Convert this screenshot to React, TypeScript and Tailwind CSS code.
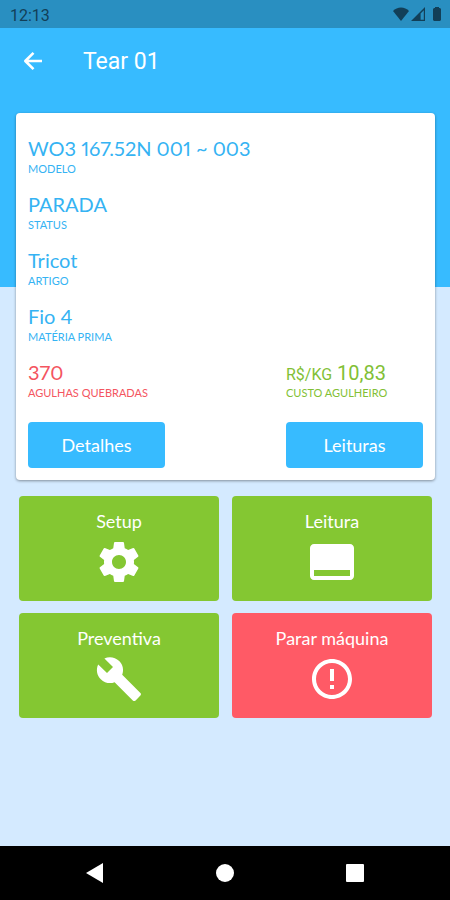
import type { ReactNode } from "react";
import { MdCallToAction, MdErrorOutline } from "react-icons/md";

type FieldProps = {
  label: string;
  color?: string;
  children: ReactNode;
};

type TileProps = {
  label: string;
  icon: ReactNode;
  color?: string;
};

function StatusBar() {
  return (
    <div className="flex h-7 items-center justify-between bg-[#298fc1] pr-2 pl-[10px] text-[#123f58]">
      <span className="pt-[3px] font-[Roboto,sans-serif] text-base leading-5">12:13</span>
      <div className="flex items-center" aria-hidden="true">
        <svg width="18" height="14" viewBox="0 0 18 14" fill="currentColor">
          <path d="M9 14 1 4C3 2 6 .6 9 .6S15 2 17 4Z" />
        </svg>
        <svg width="16" height="14" viewBox="0 0 16 14" fill="currentColor">
          <path fillRule="evenodd" d="M15 0v14H1ZM13.8 3.2 10.6 6.4v6.3h3.2Z" />
        </svg>
        <svg width="10" height="14" viewBox="0 0 10 14" className="ml-[6px]" fill="currentColor">
          <path d="M3 0h4v1h1l1 1v11l-1 1H2l-1-1V2l1-1h1Z" />
        </svg>
      </div>
    </div>
  );
}

function BackIcon() {
  return (
    <svg
      width="26"
      height="26"
      viewBox="0 0 26 26"
      fill="none"
      stroke="currentColor"
      strokeWidth="2.6"
      strokeLinejoin="round"
    >
      <path d="M22 13H5.5M13.5 4.8 5.3 13l8.2 8.2" />
    </svg>
  );
}

function GearIcon() {
  return (
    <svg width="1em" height="1em" viewBox="0 0 24 24" fill="currentColor">
      <path d="M19.43 12.98c.04-.32.07-.64.07-.98s-.03-.66-.07-.98l2.11-1.65c.19-.15.24-.42.12-.64l-2-3.46c-.12-.22-.39-.3-.61-.22l-2.49 1c-.52-.4-1.08-.73-1.69-.98l-.38-2.65C14.46 2.18 14.25 2 14 2h-4c-.25 0-.46.18-.49.42l-.38 2.65c-.61.25-1.17.59-1.69.98l-2.49-1c-.23-.09-.49 0-.61.22l-2 3.46c-.13.22-.07.49.12.64l2.11 1.65c-.04.32-.07.65-.07.98s.03.66.07.98l-2.11 1.65c-.19.15-.24.42-.12.64l2 3.46c.12.22.39.3.61.22l2.49-1c.52.4 1.08.73 1.69.98l.38 2.65c.03.24.24.42.49.42h4c.25 0 .46-.18.49-.42l.38-2.65c.61-.25 1.17-.59 1.69-.98l2.49 1c.23.09.49 0 .61-.22l2-3.46c.12-.22.07-.49-.12-.64l-2.11-1.65zM12 15.5c-1.93 0-3.5-1.57-3.5-3.5s1.57-3.5 3.5-3.5 3.5 1.57 3.5 3.5-1.57 3.5-3.5 3.5z" />
    </svg>
  );
}

function WrenchIcon() {
  return (
    <svg width="1em" height="1em" viewBox="0 0 24 24" fill="currentColor">
      <path d="M22.7 19l-9.1-9.1c.9-2.3.4-5-1.5-6.9-2-2-5-2.4-7.4-1.3L9 6 6 9 1.6 4.7C.4 7.1.9 10.1 2.9 12.1c1.9 1.9 4.6 2.4 6.9 1.5l9.1 9.1c.4.4 1 .4 1.4 0l2.3-2.3c.5-.4.5-1.1.1-1.4z" />
    </svg>
  );
}

function Field({ label, color = "text-[#35b3f3]", children }: FieldProps) {
  return (
    <div className={`flex h-14 flex-col ${color}`}>
      <dd className="text-xl leading-6 proportional-nums">{children}</dd>
      <dt className="text-[11px] leading-[18px]">{label}</dt>
    </div>
  );
}

function Tile({ label, icon, color = "bg-[#84c732]" }: TileProps) {
  return (
    <button
      type="button"
      className={`flex h-[105px] flex-col items-center rounded pt-[13px] text-lg leading-6 text-white ${color}`}
    >
      {label}
      <span className="mt-[5px] text-5xl leading-none">{icon}</span>
    </button>
  );
}

export default function App() {
  return (
    <div className="flex min-h-screen flex-col bg-[#d4eaff] font-[Lato,sans-serif]">
      <StatusBar />

      {/* Header band, the card overlaps its lower part */}
      <header className="h-[259px] bg-[#37bbff] text-white">
        <div className="flex h-[66px] items-center px-5">
          <button type="button" aria-label="Voltar">
            <BackIcon />
          </button>
          <h1 className="ml-[37px] pt-px font-[Roboto,sans-serif] text-[23px] leading-8">Tear 01</h1>
        </div>
      </header>

      <main className="-mt-[174px] flex-1 pb-8">
        <section className="mr-[15px] ml-4 rounded bg-white px-3 pt-[23px] pb-3 shadow-[0_1px_3px_rgba(0,0,0,0.4)]">
          <dl>
            <Field label="MODELO">WO3 167.52N 001 ~ 003</Field>
            <Field label="STATUS">PARADA</Field>
            <Field label="ARTIGO">Tricot</Field>
            <Field label="MATÉRIA PRIMA">Fio 4</Field>
            <div className="flex justify-between">
              <Field label="AGULHAS QUEBRADAS" color="text-[#f4555f]">
                370
              </Field>
              <div className="w-[137px]">
                <Field label="CUSTO AGULHEIRO" color="text-[#82bf35]">
                  <span className="block h-6 font-[Roboto,sans-serif] leading-[26px] normal-nums">
                    <span className="text-base leading-6">R$/KG</span> 10,83
                  </span>
                </Field>
              </div>
            </div>
          </dl>
          <div className="mt-[6px] flex justify-between text-lg text-white">
            <button type="button" className="h-[46px] w-[137px] rounded bg-[#37bbff]">
              Detalhes
            </button>
            <button type="button" className="h-[46px] w-[137px] rounded bg-[#37bbff]">
              Leituras
            </button>
          </div>
        </section>

        <div className="mt-4 mr-[18px] ml-[19px] grid grid-cols-2 gap-x-[13px] gap-y-3">
          <Tile label="Setup" icon={<GearIcon />} />
          <Tile label="Leitura" icon={<MdCallToAction />} />
          <Tile label="Preventiva" icon={<WrenchIcon />} />
          <Tile label="Parar máquina" icon={<MdErrorOutline />} color="bg-[#ff5a66]" />
        </div>
      </main>

      {/* Android navigation */}
      <nav className="grid h-[54px] grid-cols-3 place-items-center bg-black px-[30px]">
        <button type="button" aria-label="Anterior">
          <svg width="18" height="20" viewBox="0 0 18 20" fill="#fff">
            <path d="M17 0v20L0 10Z" />
          </svg>
        </button>
        <button type="button" aria-label="Início" className="size-[18px] rounded-full bg-white" />
        <button type="button" aria-label="Recentes" className="size-[18px] rounded-[1px] bg-white" />
      </nav>
    </div>
  );
}
